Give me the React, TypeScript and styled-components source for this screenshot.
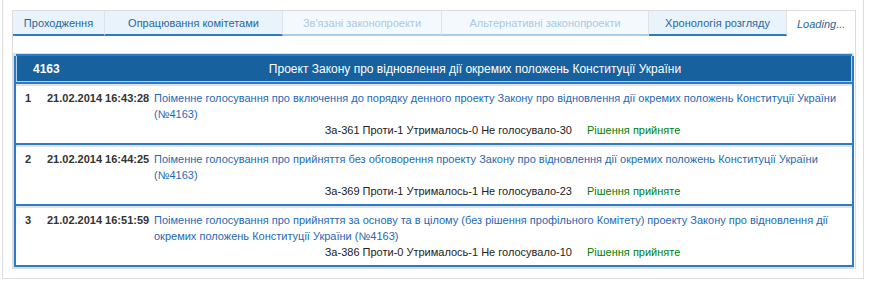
import React from 'react';
import styled, { createGlobalStyle } from 'styled-components';

interface Vote {
  no: number;
  date: string;
  title: string;
  votes: string;
  result: string;
}

const votesList: Vote[] = [
  {
    no: 1,
    date: '21.02.2014 16:43:28',
    title:
      'Поіменне голосування про включення до порядку денного проекту Закону про відновлення дії окремих положень Конституції України (№4163)',
    votes: 'За-361 Проти-1 Утрималось-0 Не голосувало-30',
    result: 'Рішення прийняте',
  },
  {
    no: 2,
    date: '21.02.2014 16:44:25',
    title:
      'Поіменне голосування про прийняття без обговорення проекту Закону про відновлення дії окремих положень Конституції України (№4163)',
    votes: 'За-369 Проти-1 Утрималось-1 Не голосувало-23',
    result: 'Рішення прийняте',
  },
  {
    no: 3,
    date: '21.02.2014 16:51:59',
    title:
      'Поіменне голосування про прийняття за основу та в цілому (без рішення профільного Комітету) проекту Закону про відновлення дії окремих положень Конституції України (№4163)',
    votes: 'За-386 Проти-0 Утрималось-1 Не голосувало-10',
    result: 'Рішення прийняте',
  },
];

const tabs = [
  { label: 'Проходження', width: 92, disabled: false },
  { label: 'Опрацювання комітетами', width: 178, disabled: false },
  { label: "Зв'язані законопроекти", width: 159, disabled: true },
  { label: 'Альтернативні законопроекти', width: 207, disabled: true },
  { label: 'Хронологія розгляду', width: 138, disabled: false },
];

const App: React.FC = () => {
  return (
    <>
      <GlobalStyle />
      <Frame>
        <TabsBox>
          <TabNav>
            {tabs.map((t) => (
              <Tab key={t.label} $width={t.width} $disabled={t.disabled}>
                {t.label}
              </Tab>
            ))}
            <Loading>Loading...</Loading>
          </TabNav>
          <TabPanel>
            <Shadow>
              <Panel>
                <Header>
                  <HeaderNo>4163</HeaderNo>
                  <HeaderTitle>
                    Проект Закону про відновлення дії окремих положень
                    Конституції України
                  </HeaderTitle>
                </Header>
                {votesList.map((v) => (
                  <Row key={v.no}>
                    <Num>{v.no}</Num>
                    <DateCell>{v.date}</DateCell>
                    <Desc>
                      <Link href="#">{v.title}</Link>
                      <VotesLine>
                        <Counts>{v.votes}</Counts>
                        <Result>{v.result}</Result>
                      </VotesLine>
                    </Desc>
                  </Row>
                ))}
              </Panel>
            </Shadow>
          </TabPanel>
        </TabsBox>
      </Frame>
    </>
  );
};

const GlobalStyle = createGlobalStyle`
  body {
    margin: 0;
    background: #fff;
    font-family: "Liberation Sans", Arial, sans-serif;
    font-size: 11px;
    color: #222;
  }
`;

const Frame = styled.div`
  margin-left: 2px;
  width: 862px;
  box-sizing: border-box;
  border: 1px solid #dedede;
  border-top: none;
  padding: 10px 7px 9px 9px;
`;

const TabsBox = styled.div`
  border: 1px solid #dcdcdc;
  border-bottom: none;
`;

const TabNav = styled.div`
  display: flex;
  height: 25px;
`;

const Tab = styled.div<{ $width: number; $disabled: boolean }>`
  width: ${(p) => p.$width}px;
  box-sizing: border-box;
  height: 25px;
  display: flex;
  align-items: center;
  justify-content: center;
  border-right: 1px solid #dfe3e7;
  border-bottom: 2px solid ${(p) => (p.$disabled ? '#a9cde9' : '#2b7cc4')};
  background: ${(p) => (p.$disabled ? '#f4f9fe' : '#e8f3fc')};
  color: ${(p) => (p.$disabled ? '#a9c9e4' : '#2a669e')};
  white-space: nowrap;
`;

const Loading = styled.div`
  flex: 1;
  display: flex;
  align-items: center;
  padding-left: 10px;
  font-style: italic;
  color: #2a669e;
`;

const TabPanel = styled.div`
  padding-top: 17px;
`;

const Shadow = styled.div`
  margin-right: 1px;
  background: #dddddd;
  padding: 1px 0 2px 1px;
`;

const Panel = styled.div`
  border: 2px solid #2b7cc4;
  border-top: none;
  background: #fff;
`;

const Header = styled.div`
  display: flex;
  height: 26px;
  box-sizing: border-box;
  border: 1px solid #b3d0ea;
  border-top: none;
  box-shadow: 0 -2px 0 #2b7cc4;
  margin-top: 2px;
  background: #17619f;
  color: #fff;
  font-size: 12px;
  align-items: center;
`;

const HeaderNo = styled.div`
  width: 82px;
  padding-left: 16px;
  box-sizing: border-box;
  font-weight: bold;
`;

const HeaderTitle = styled.div`
  flex: 1;
  text-align: center;
`;

const Row = styled.div`
  display: grid;
  grid-template-columns: 24px 114px 1fr;
  border-top: 2px solid #2b7cc4;
  box-shadow: inset 0 2px 0 #e2e2e2;
  padding: 6px 0 5px;
  line-height: 16px;
`;

const Num = styled.div`
  text-align: center;
  font-weight: bold;
  color: #333;
`;

const DateCell = styled.div`
  padding-left: 7px;
  font-weight: bold;
  color: #333;
  white-space: nowrap;
`;

const Desc = styled.div`
  padding-right: 6px;
`;

const Link = styled.a`
  display: block;
  color: #1f68b2;
  text-decoration: none;
`;

const VotesLine = styled.div`
  display: flex;
`;

const Counts = styled.span`
  width: 418px;
  text-align: right;
  white-space: nowrap;
  color: #222;
`;

const Result = styled.span`
  margin-left: 15px;
  color: #008000;
`;

export default App;
